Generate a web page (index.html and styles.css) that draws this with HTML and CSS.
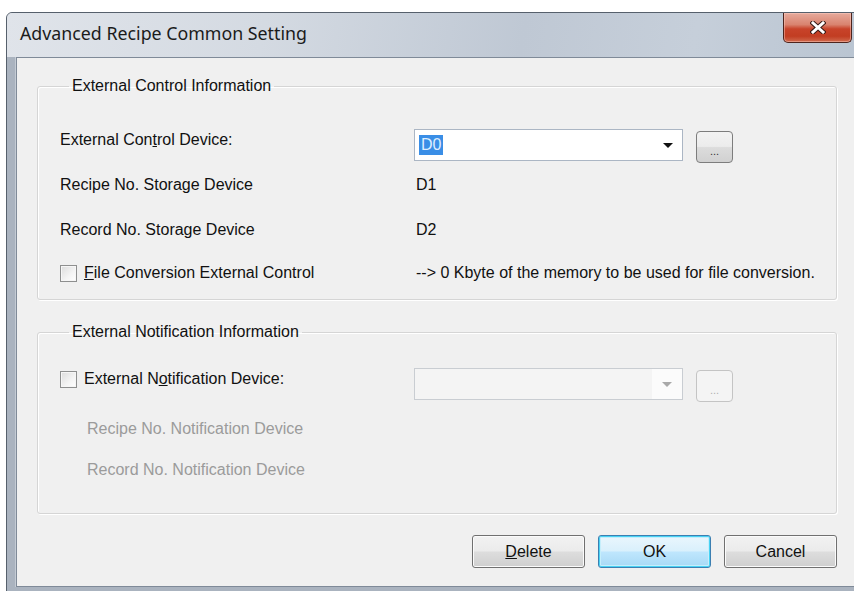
FILE: index.html
```html
<!DOCTYPE html>
<html lang="en">
<head>
<meta charset="utf-8">
<title>Advanced Recipe Common Setting</title>
<link rel="stylesheet" href="styles.css">
</head>
<body>
<div class="window">
  <div class="titlebar">
    <span class="title">Advanced Recipe Common Setting</span>
    <button class="close" type="button" aria-label="Close">
      <svg width="16" height="13" viewBox="0 0 16 13">
        <path d="M3 2 L13 11 M13 2 L3 11" stroke="#3a1b16" stroke-width="5" stroke-linecap="square" fill="none"/>
        <path d="M3 2 L13 11 M13 2 L3 11" stroke="#ffffff" stroke-width="3" stroke-linecap="square" fill="none"/>
      </svg>
    </button>
  </div>

  <div class="client">
    <fieldset class="group group-control">
      <legend>External Control Information</legend>
      <div class="rows rows-control">
        <span class="lbl">External Con<u>t</u>rol Device:</span>
        <div class="ctl">
          <div class="combo"><span class="sel">D0</span><span class="arrow"></span></div>
          <button class="browse" type="button">...</button>
        </div>

        <span class="lbl">Recipe No. Storage Device</span>
        <span class="val">D1</span>

        <span class="lbl">Record No. Storage Device</span>
        <span class="val">D2</span>

        <span class="lbl check"><span class="box"></span><span><u>F</u>ile Conversion External Control</span></span>
        <span class="val">--&gt; 0 Kbyte of the memory to be used for file conversion.</span>
      </div>
    </fieldset>

    <fieldset class="group group-notify">
      <legend>External Notification Information</legend>
      <div class="rows rows-notify">
        <span class="lbl check"><span class="box"></span><span>External N<u>o</u>tification Device:</span></span>
        <div class="ctl">
          <div class="combo disabled"><span class="field"></span><span class="drop"><span class="arrow"></span></span></div>
          <button class="browse disabled" type="button">...</button>
        </div>

        <span class="lbl sub">Recipe No. Notification Device</span>
        <span></span>

        <span class="lbl sub">Record No. Notification Device</span>
        <span></span>
      </div>
    </fieldset>

    <div class="actions">
      <button class="btn" type="button"><u>D</u>elete</button>
      <button class="btn default" type="button">OK</button>
      <button class="btn" type="button">Cancel</button>
    </div>
  </div>
</div>
</body>
</html>
```

FILE: styles.css
```css
html, body {
  margin: 0;
  padding: 0;
  background: #ffffff;
  overflow: hidden;
  width: 854px;
  height: 591px;
}

/* Window frame (Windows 7 basic style) */
.window {
  margin: 12px 0 0 6px;
  width: 860px;
  height: 600px;
  box-sizing: border-box;
  border: 1px solid #56606c;
  border-radius: 6px 6px 0 0;
  background: #aab3bf;
  font-family: "Liberation Sans", Arial, sans-serif;
  overflow: hidden;
}

.titlebar {
  height: 44px;
  display: flex;
  align-items: flex-start;
  background: linear-gradient(100deg, #e0e4ea 0%, #d4dae2 30%, #bfc8d4 60%, #c6cfda 80%, #b9c4d1 100%);
}

.title {
  font-family: "Noto Sans", "Open Sans", sans-serif;
  font-size: 17.8px;
  color: #1b1b1b;
  padding: 8px 0 0 13px;
  flex: 1;
}

.close {
  width: 69px;
  height: 30px;
  margin: 0 13px 0 0;
  padding: 0;
  border: 1px solid #4e241d;
  border-top: 0;
  border-radius: 0 0 5px 5px;
  background: linear-gradient(180deg, #e6aa9c 0%, #d9836f 40%, #c8432a 55%, #c23d22 80%, #d06a4e 100%);
  box-shadow: inset 0 0 0 1px rgba(255, 210, 200, 0.45);
  display: flex;
  align-items: center;
  justify-content: center;
}

.client {
  margin-left: 9px;
  height: 530px;
  background: #f0f0f0;
  border: 1px solid #7f8a98;
  border-right: 0;
  box-shadow: -1px 0 0 #c4cbd4;
  padding: 19px 0 0 20px;
  box-sizing: border-box;
  color: #111111;
  font-size: 16px;
}

/* Group boxes */
.group {
  width: 800px;
  min-width: 0;
  box-sizing: border-box;
  margin: 0;
  border: 1px solid #d5d5d5;
  border-radius: 3px;
  box-shadow: inset 1px 1px 0 #ffffff, 1px 1px 0 #ffffff;
  padding: 0 0 0 22px;
}

.group legend {
  padding: 0 3px;
  margin-left: 9px;
  line-height: 18px;
  color: #111111;
}

.group-control {
  padding-top: 23px;
  padding-bottom: 5px;
}

.group-notify {
  margin-top: 23px;
  padding-top: 14px;
  padding-bottom: 28px;
}

.rows {
  display: grid;
  grid-template-columns: 354px 1fr;
  align-items: center;
}

.rows-control {
  grid-template-rows: 44px 46px 44px 42px;
}

.rows-notify {
  grid-template-rows: 48px 52px 30px;
}

.lbl {
  white-space: nowrap;
}

.lbl.sub {
  padding-left: 27px;
  color: #9b9b9b;
}

.check {
  display: flex;
  align-items: center;
  gap: 7px;
}

.box {
  width: 15px;
  height: 15px;
  border: 1px solid #8e8f8f;
  background: linear-gradient(135deg, #dcdcdc 0%, #f4f4f4 60%, #ffffff 100%);
  box-shadow: inset 0 0 0 1px #f6f6f6;
  flex: none;
}

.ctl {
  display: flex;
  align-items: center;
  gap: 13px;
  margin-top: 10px;
}

.combo {
  width: 269px;
  height: 32px;
  box-sizing: border-box;
  border: 1px solid #abb6c4;
  background: #ffffff;
  display: flex;
  align-items: center;
  padding: 0 9px 0 4px;
  justify-content: space-between;
}

.sel {
  background: #3a8ee6;
  color: #dfeeff;
  padding: 0 2px;
  line-height: 20px;
}

.arrow {
  width: 0;
  height: 0;
  border-left: 5px solid transparent;
  border-right: 5px solid transparent;
  border-top: 5px solid #111111;
}

.combo.disabled {
  border-color: #c9cdd2;
  background: #f4f4f4;
  padding: 0;
}

.combo.disabled .field {
  flex: 1;
  height: 100%;
}

.combo.disabled .drop {
  width: 30px;
  height: 100%;
  background: #fbfbfb;
  display: flex;
  align-items: center;
  justify-content: center;
}

.combo.disabled .arrow {
  border-top-color: #a9a9a9;
}

.browse {
  width: 37px;
  height: 32px;
  margin-top: 4px;
  padding: 0 0 5px;
  border: 1px solid #7d7d7d;
  border-radius: 4px;
  background: linear-gradient(180deg, #f3f3f3 0%, #ececec 48%, #dcdcdc 52%, #d1d1d1 100%);
  font-family: "Liberation Sans", Arial, sans-serif;
  font-size: 11px;
  color: #333333;
  display: flex;
  align-items: flex-end;
  justify-content: center;
  box-sizing: border-box;
}

.browse.disabled {
  border-color: #c4c4c4;
  background: #f4f4f4;
  color: #b0b0b0;
}

.val {
  white-space: nowrap;
  padding-left: 2px;
}

/* Dialog buttons */
.actions {
  width: 800px;
  margin-top: 21px;
  display: flex;
  justify-content: flex-end;
  gap: 13px;
}

.btn {
  width: 113px;
  height: 33px;
  box-sizing: border-box;
  border: 1px solid #707070;
  border-radius: 3px;
  background: linear-gradient(180deg, #f2f2f2 0%, #ebebeb 48%, #dddddd 52%, #cfcfcf 100%);
  box-shadow: inset 0 0 0 1px #fbfbfb;
  font-family: "Liberation Sans", Arial, sans-serif;
  font-size: 16px;
  color: #111111;
  padding: 0;
}

.btn.default {
  border-color: #3c7fb1;
  box-shadow: inset 0 0 0 1px #48d2f4, inset 0 0 0 2px #c6eefb;
  background: linear-gradient(180deg, #eaf6fd 0%, #d9f0fc 48%, #bee6fd 52%, #a7d9f5 100%);
}
```
